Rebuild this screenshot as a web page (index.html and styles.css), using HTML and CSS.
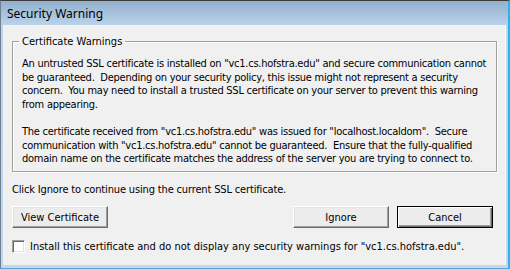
FILE: index.html
```html
<!DOCTYPE html>
<html>
<head>
<meta charset="utf-8">
<link rel="stylesheet" href="styles.css">
</head>
<body>
<div class="window">
  <div class="titlebar"><span class="title">Security Warning</span></div>
  <div class="client">
    <fieldset class="group">
      <legend class="legend">Certificate Warnings</legend>
      <p class="para">An untrusted SSL certificate is installed on "vc1.cs.hofstra.edu" and secure communication cannot<br>be guaranteed.&nbsp; Depending on your security policy, this issue might not represent a security<br>concern.&nbsp; You may need to install a trusted SSL certificate on your server to prevent this warning<br>from appearing.</p>
      <p class="para para2">The certificate received from "vc1.cs.hofstra.edu" was issued for "localhost.localdom".&nbsp; Secure<br>communication with "vc1.cs.hofstra.edu" cannot be guaranteed.&nbsp; Ensure that the fully-qualified<br>domain name on the certificate matches the address of the server you are trying to connect to.</p>
    </fieldset>
    <p class="hint">Click Ignore to continue using the current SSL certificate.</p>
    <div class="buttons">
      <button class="btn">View Certificate</button>
      <div class="spacer"></div>
      <button class="btn">Ignore</button>
      <button class="btn default">Cancel</button>
    </div>
    <label class="check"><span class="box"></span><span class="checktext">Install this certificate and do not display any security warnings for "vc1.cs.hofstra.edu".</span></label>
  </div>
</div>
</body>
</html>
```
FILE: styles.css
```css
html, body {
  margin: 0;
  padding: 0;
  background: #ffffff;
}
.window {
  width: 510px;
  height: 269px;
  box-sizing: border-box;
  background: linear-gradient(#93b0cd, #bcd4ec 25px, #c2d8ee);
  border-top: 1px solid #3c3c3c;
  border-left: 1px solid #6c7f93;
  border-right: 2px solid #2ab4ec;
  border-bottom: 1px solid #5aa8d8;
  display: flex;
  flex-direction: column;
  font-family: "DejaVu Sans Condensed", "Liberation Sans", sans-serif;
  font-size: 11px;
  color: #000;
}
.titlebar {
  height: 24px;
  display: flex;
  align-items: center;
  padding-left: 6px;
}
.title {
  font-family: "Noto Sans", "Open Sans", sans-serif;
  font-size: 12px;
  color: #000;
  margin-top: 1px;
}
.client {
  margin: 0 2px 3px 2px;
  flex: 1;
  background: #f0f0f0;
  border-right: 1px solid #fbfbfb;
  padding: 0 8px 0 9px;
  display: flex;
  flex-direction: column;
}
.group {
  margin: 10px 0 0 0;
  padding: 9px 0 5px 9px;
  border: 1px solid #a0a0a0;
  box-shadow: 1px 1px 0 #ffffff, inset 1px 1px 0 #ffffff;
  height: 137px;
  box-sizing: border-box;
  min-width: 0;
}
.legend {
  padding: 0 3px;
  margin-left: -3px;
  line-height: 13px;
}
.para {
  margin: 0;
  line-height: 13.5px;
  white-space: nowrap;
  letter-spacing: -0.25px;
}
.para2 {
  margin-top: 14px;
}
.hint {
  margin: 11px 0 0 0;
  line-height: 13px;
  letter-spacing: -0.15px;
}
.buttons {
  display: flex;
  margin-top: 10px;
  gap: 8px;
}
.spacer {
  flex: 1;
}
.btn {
  width: 96px;
  height: 22px;
  padding: 0;
  font: inherit;
  color: #000;
  background: #ececec;
  border: 1px solid;
  border-color: #ffffff #696969 #696969 #ffffff;
  box-shadow: inset -1px -1px 0 #a0a0a0, inset 1px 1px 0 #e3e3e3;
}
.btn.default {
  border: 1px solid #000;
  box-shadow: inset 1px 1px 0 #ffffff, inset -1px -1px 0 #696969, inset -2px -2px 0 #a0a0a0;
  margin-right: 4px;
}
.check {
  display: flex;
  align-items: center;
  margin-top: 12px;
}
.box {
  width: 13px;
  height: 13px;
  box-sizing: border-box;
  border: 1px solid;
  border-color: #a0a0a0 #ffffff #ffffff #a0a0a0;
  box-shadow: inset 1px 1px 0 #696969, inset -1px -1px 0 #e3e3e3;
  background: #ffffff;
  margin-right: 5px;
}
```
